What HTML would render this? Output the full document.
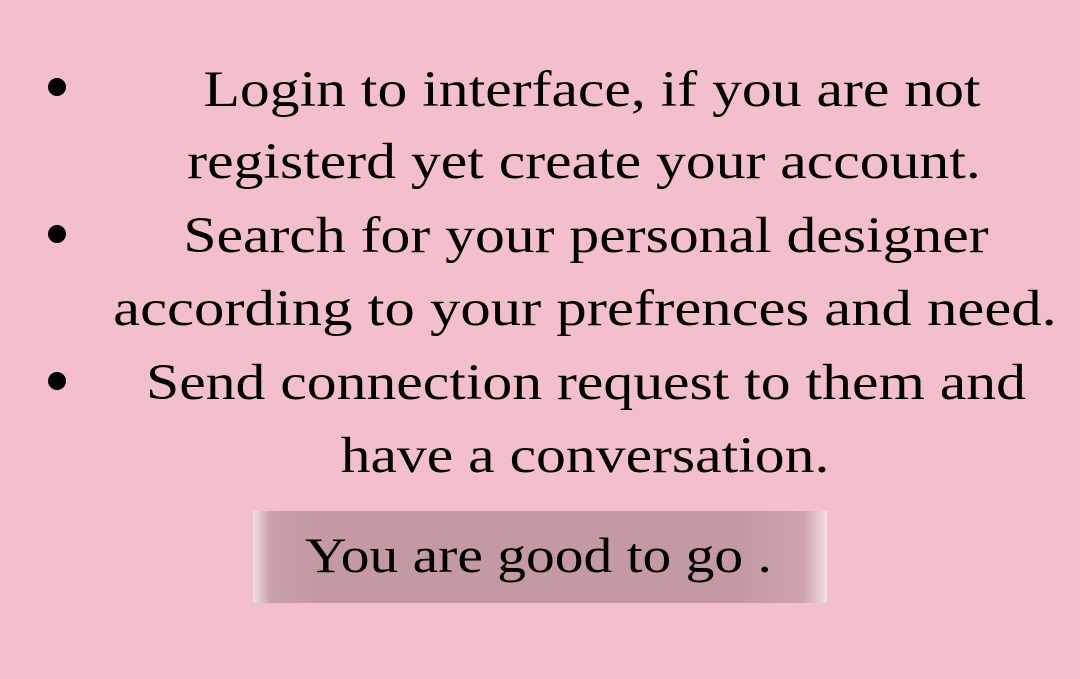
<!DOCTYPE html>
<html><head><meta charset="utf-8"><style>
html,body{margin:0;padding:0}
body{width:1080px;height:679px;background:#f3bfcc;position:relative;overflow:hidden;font-family:"Liberation Serif",serif;color:#000}
.l{position:absolute;left:186px;width:800px;text-align:center;font-size:51px;line-height:60px;white-space:nowrap;transform:scaleX(1.17);transform-origin:50% 50%}
.b{position:absolute;left:48px;width:18px;height:18px;border-radius:50%;background:#000}
.btn{position:absolute;left:253px;top:511px;width:574px;height:92px;background:linear-gradient(90deg,#f5dde3 0%,#c9a0aa 3%,#c499a4 10%,#c499a4 85%,#cfa3ae 96%,#f5dde3 100%)}
.btn span{position:absolute;left:52px;top:14px;font-size:50px;line-height:60px;transform:scaleX(1.15);transform-origin:0 50%;white-space:nowrap}
</style></head><body>
<div class="b" style="top:78px"></div>
<div class="b" style="top:225px"></div>
<div class="b" style="top:372px"></div>
<div class="l" style="top:60px;left:192px">Login to interface, if you are not</div>
<div class="l" style="top:132px;left:184px">registerd yet create your account.</div>
<div class="l" style="top:206px">Search for your personal designer</div>
<div class="l" style="top:279px;left:185px;transform:scaleX(1.19)">according to your prefrences and need.</div>
<div class="l" style="top:353px">Send connection request to them and</div>
<div class="l" style="top:426px;left:185px">have a conversation.</div>
<div class="btn"><span>You are good to go .</span></div>
</body></html>
